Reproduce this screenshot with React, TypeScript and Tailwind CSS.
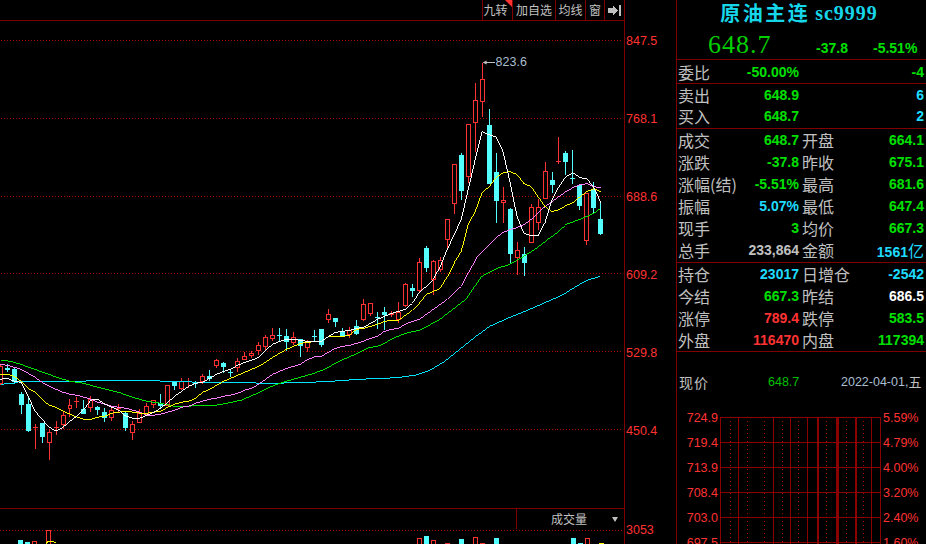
const RED = "#ff3232";
const CYAN = "#54ffff";

// [body top, body bottom, high, low, up], index 0 sits at x = -0.5, step 7px
type Candle = [number, number, number, number, 0 | 1];
const candles: Candle[] = [
  [367, 385, 365, 386, 1], [369, 371, 365, 373, 0], [370, 383, 369, 384, 0], [395, 406, 393, 415, 0],
  [405, 432, 399, 433, 0], [428, 429, 425, 450, 1], [424, 438, 424, 444, 0], [433, 444, 430, 461, 1],
  [428, 429, 422, 436, 1], [416, 426, 413, 430, 1], [406, 410, 400, 418, 1], [402, 403, 398, 409, 1],
  [410, 415, 401, 415, 0], [400, 409, 397, 413, 1], [408, 411, 407, 416, 0], [413, 419, 409, 423, 0],
  [411, 419, 407, 422, 1], [409, 410, 405, 413, 1], [414, 429, 412, 432, 0], [425, 434, 422, 441, 1],
  [414, 424, 410, 424, 1], [407, 415, 404, 416, 1], [401, 406, 401, 409, 1], [404, 407, 395, 409, 0],
  [386, 407, 386, 407, 1], [383, 387, 382, 391, 0], [382, 390, 379, 391, 1], [382, 383, 379, 389, 1],
  [383, 385, 382, 389, 0], [377, 383, 375, 385, 1], [377, 380, 371, 382, 0], [361, 367, 360, 369, 1],
  [364, 368, 363, 374, 0], [373, 374, 370, 378, 0], [362, 369, 359, 373, 1], [357, 361, 353, 361, 1],
  [354, 357, 352, 359, 1], [346, 352, 343, 356, 1], [338, 348, 336, 351, 1], [336, 340, 329, 342, 1],
  [336, 337, 329, 342, 0], [337, 343, 330, 352, 0], [338, 344, 333, 346, 1], [340, 347, 340, 358, 0],
  [342, 349, 341, 353, 1], [337, 338, 331, 342, 0], [330, 346, 330, 348, 0], [315, 321, 310, 324, 1],
  [319, 323, 319, 328, 0], [332, 337, 329, 338, 0], [331, 336, 328, 339, 1], [327, 335, 321, 336, 0],
  [305, 321, 300, 322, 1], [304, 315, 304, 317, 1], [318, 319, 313, 330, 0], [313, 316, 308, 331, 0],
  [314, 316, 312, 318, 1], [313, 321, 303, 324, 1], [285, 307, 284, 308, 1], [289, 292, 285, 298, 0],
  [262, 292, 258, 293, 1], [248, 269, 246, 273, 0], [261, 281, 260, 296, 1], [260, 271, 257, 273, 1],
  [219, 240, 219, 249, 1], [164, 204, 164, 214, 1], [155, 191, 153, 200, 0], [124, 177, 124, 183, 1],
  [100, 123, 83, 152, 1], [79, 102, 63, 117, 1], [125, 184, 109, 184, 0], [172, 201, 153, 223, 0],
  [200, 203, 187, 223, 1], [209, 254, 208, 263, 0], [250, 258, 242, 276, 1], [254, 263, 247, 277, 0],
  [207, 243, 204, 243, 1], [207, 223, 199, 230, 1], [171, 199, 162, 199, 1], [180, 185, 172, 193, 0],
  [161, 162, 137, 164, 1], [153, 162, 151, 175, 0], [178, 179, 150, 184, 0], [185, 206, 185, 210, 0],
  [193, 241, 193, 245, 1], [189, 208, 182, 213, 0], [219, 234, 203, 235, 0],
];

const ma5 = [380, 379, 382, 383, 397, 412, 420, 428, 432, 428, 422, 417, 410, 401, 400, 405, 408, 411, 417, 419, 419, 416, 413, 409, 403, 397, 392, 387, 384, 383, 379, 375, 372, 370, 366, 363, 361, 358, 351, 345, 342, 340, 340, 341, 342, 342, 342, 337, 333, 332, 331, 329, 328, 324, 320, 317, 314, 312, 310, 304, 293, 287, 280, 267, 250, 235, 220, 190, 160, 132, 135, 137, 152, 183, 217, 234, 236, 236, 223, 200, 187, 177, 173, 178, 179, 188, 203];
const ma10 = [375, 375, 377, 382, 389, 393, 400, 406, 408, 412, 415, 418, 420, 420, 418, 417, 414, 413, 412, 413, 414, 414, 413, 412, 408, 405, 403, 402, 399, 393, 390, 386, 382, 379, 376, 373, 370, 367, 363, 358, 354, 350, 347, 344, 343, 342, 342, 337, 337, 337, 336, 330, 329, 327, 325, 322, 321, 321, 316, 311, 304, 295, 292, 289, 277, 263, 252, 225, 212, 193, 187, 178, 173, 172, 175, 184, 187, 197, 207, 212, 210, 206, 203, 197, 192, 189, 192];
const ma20 = [365, 366, 368, 370, 374, 378, 383, 387, 390, 393, 395, 396, 398, 400, 403, 405, 407, 408, 409, 411, 413, 416, 416, 415, 413, 411, 408, 407, 404, 402, 400, 399, 397, 396, 394, 391, 389, 385, 380, 375, 372, 369, 367, 365, 360, 357, 357, 353, 349, 347, 346, 344, 342, 339, 337, 332, 330, 329, 325, 322, 320, 315, 310, 305, 300, 293, 287, 273, 260, 252, 245, 238, 233, 230, 228, 225, 220, 213, 207, 202, 197, 192, 188, 185, 184, 187, 188];
const ma40 = "0,361 10,362 20,365 34,370 48,375 62,380 69,382 83,384 97,388 118,393 132,398 146,402 160,404 174,407 188,407 202,406 216,406 227,404 241,401 255,395 269,388 283,383 297,379 311,375 325,370 339,362 353,356 367,349 381,346 395,338 409,333 420,331 440,320 453,310 466,300 482,277 497,269 510,265 524,257 538,248 552,237 566,225 580,220 594,214 601,209";
const ma60 = "0,385 14,384 20,382 85,382 87,381 135,381 200,383 275,384 311,383 332,382 360,380 386,379 400,378 415,376 430,371 445,362 460,350 475,338 490,327 510,318 530,310 555,299 567,293 580,285 590,280 601,277";

const cx = (i: number) => i * 7 - 0.5;
const toPoints = (ys: number[]) => ys.map((y, i) => `${cx(i)},${y}`).join(" ");

const volumes: [number, number, string][] = [
  [20.5, 540, CYAN], [27.5, 542, CYAN], [34.5, 541, RED], [48.5, 530, RED], [419.5, 538, RED], [426.5, 536, CYAN],
  [433.5, 540, RED], [447.5, 543, RED], [461.5, 539, CYAN], [475.5, 537, RED], [482.5, 543, RED], [496.5, 538, CYAN],
  [573.5, 538, CYAN], [580.5, 543, CYAN], [587.5, 538, RED], [601.5, 543, "#ffff00"],
];

function Chart() {
  return (
    <svg width="624" height="488" viewBox="0 21 624 488" className="block">
      <g shapeRendering="crispEdges">
        {[40, 118, 196, 274, 352, 430].map((y) => (
          <line key={y} x1="0" x2="624" y1={y + 0.5} y2={y + 0.5} stroke="#b00000" strokeDasharray="1 2" />
        ))}
        {candles.map(([top, bottom, high, low, up], i) => {
          const color = up ? RED : CYAN;
          const x = cx(i);
          return (
            <g key={i}>
              <line x1={x} x2={x} y1={high} y2={low} stroke={color} />
              {up ? (
                bottom - top < 2 ? (
                  <line x1={x - 2.5} x2={x + 2.5} y1={top + 0.5} y2={top + 0.5} stroke={color} />
                ) : (
                  <rect x={x - 2} y={top + 0.5} width="4" height={bottom - top - 1} fill="#000" stroke={color} />
                )
              ) : (
                <rect x={x - 2.5} y={top} width="5" height={bottom - top} fill={color} />
              )}
            </g>
          );
        })}
      </g>
      <g fill="none" strokeWidth="1" shapeRendering="crispEdges">
        <polyline points={ma60} stroke="#00e5ff" />
        <polyline points={ma40} stroke="#00e600" />
        <polyline points={toPoints(ma20)} stroke="#ff80ff" />
        <polyline points={toPoints(ma10)} stroke="#ffff00" />
        <polyline points={toPoints(ma5)} stroke="#ffffff" />
      </g>
      <line x1="484" x2="495" y1="62.5" y2="62.5" stroke="#c0c0c0" shapeRendering="crispEdges" />
      <polygon points="483,62.5 487,60.5 487,64.5" fill="#c0c0c0" />
      <text x="496" y="66" fill="#a9bfd2" fontSize="12.5" fontFamily="'Liberation Sans', sans-serif">
        823.6
      </text>
    </svg>
  );
}

function VolumeBars() {
  return (
    <svg width="624" height="15" viewBox="0 529 624 15" className="block" shapeRendering="crispEdges">
      <line x1="0" x2="624" y1="530.5" y2="530.5" stroke="#b00000" strokeDasharray="1 2" />
      {volumes.map(([x, y, color], i) =>
        color === CYAN ? (
          <rect key={i} x={x - 2.5} y={y} width="5" height={544 - y} fill={color} />
        ) : (
          <rect key={i} x={x - 2} y={y + 0.5} width="4" height={20} fill="#000" stroke={color} />
        ),
      )}
      <polyline points="46,544 48,541 52,541 56,543" fill="none" stroke="#ffff00" />
    </svg>
  );
}

function MiniGrid() {
  const solid = [0, 18, 53, 70, 87, 97, 116, 135, 151, 160];
  const thick = [97, 117, 135];
  const dotted = [10, 27, 44, 62, 78, 106, 126, 143];
  return (
    <svg width="161" height="127" viewBox="0 0 161 127" className="mt-[9px] block" shapeRendering="crispEdges">
      {[0, 25, 50, 75, 100, 125].map((y) => (
        <line key={y} x1="0" x2="160" y1={y + 0.5} y2={y + 0.5} stroke="#8b0000" />
      ))}
      {solid.map((x) => (
        <line key={x} x1={x + 0.5} x2={x + 0.5} y1="0" y2="127" stroke="#8b0000" />
      ))}
      {thick.map((x) => (
        <line key={x} x1={x + 1} x2={x + 1} y1="0" y2="127" stroke="#8b0000" strokeWidth="2" />
      ))}
      {dotted.map((x) => (
        <line key={x} x1={x + 0.5} x2={x + 0.5} y1="4" y2="127" stroke="#b00000" strokeDasharray="1 3" />
      ))}
    </svg>
  );
}

const GREEN = "text-[#00e000]";
const SKY = "text-[#1fdcff]";

type Cell = { label?: string; value: string; color: string; unit?: string };

function Value({ value, color, unit }: { value: string; color: string; unit?: string }) {
  return (
    <span className={`font-['Liberation_Sans'] text-[14px] font-bold leading-none ${color}`}>
      {value}
      {unit && <span className="font-['Noto_Sans_CJK_SC'] text-[16px] font-normal leading-none">{unit}</span>}
    </span>
  );
}

function Row({ left, right }: { left: Cell; right: Cell }) {
  return (
    <div className="grid flex-1 grid-cols-[121px_1fr] items-center gap-x-[3px] pl-[1px] pr-[2px]">
      {[left, right].map((cell, i) => (
        <div key={i} className="flex items-center justify-between whitespace-nowrap">
          <span className="text-[16px] leading-none text-[#c0c0c0]">{cell.label}</span>
          <Value value={cell.value} color={cell.color} unit={cell.unit} />
        </div>
      ))}
    </div>
  );
}

const tools = [
  { label: "九转", cls: "w-[30px] pr-[4px]" },
  { label: "加自选", cls: "w-[43px]" },
  { label: "均线", cls: "w-[30px]" },
  { label: "窗", cls: "w-[19px]" },
];

export default function App() {
  return (
    <div className="flex h-[544px] w-[926px] overflow-hidden bg-black font-['Noto_Sans_CJK_SC','Liberation_Sans',sans-serif]">
      {/* chart */}
      <div className="flex w-[624px] shrink-0 flex-col">
        <div className="flex h-[21px] shrink-0 justify-end border-b border-[#800000]">
          {tools.map((t, i) => (
            <div
              key={t.label}
              className={`relative flex items-center justify-center border-l border-[#800000] text-[12px] leading-none text-[#c0c0c0] ${t.cls}`}
            >
              {t.label}
              {i === 0 && (
                <span className="absolute right-0 top-0 h-0 w-0 border-l-[7px] border-t-[7px] border-l-transparent border-t-[#ff3232]" />
              )}
            </div>
          ))}
          <div className="flex w-[20px] items-center justify-center border-l border-[#800000]">
            <svg width="13" height="11" viewBox="0 0 13 11" shapeRendering="crispEdges">
              <path d="M0 3h5V0l5 5.5-5 5.5V8H0z" fill="#c0c0c0" />
              <rect x="11" y="0" width="2" height="11" fill="#c0c0c0" />
            </svg>
          </div>
        </div>
        <Chart />
        <div className="flex flex-1 flex-col border-t border-[#800000]">
          <div className="flex h-[20px] shrink-0 justify-end">
            <div className="flex w-[108px] items-center border-l border-[#800000] pl-[34px]">
              <span className="text-[12px] leading-none text-[#c0c0c0]">成交量</span>
              <span className="ml-[25px] h-0 w-0 border-x-[3px] border-t-[5px] border-x-transparent border-t-[#c0c0c0]" />
            </div>
          </div>
          <VolumeBars />
        </div>
      </div>

      {/* price axis */}
      <div className="flex w-[52px] shrink-0 flex-col border-l border-[#800000] pl-[1px] pt-[31px] font-['Liberation_Sans'] text-[12.5px] leading-[20px] text-[#ff3232]">
        {["847.5", "768.1", "688.6", "609.2", "529.8", "450.4"].map((p) => (
          <div key={p} className="h-[78px] shrink-0">
            {p}
          </div>
        ))}
        <div className="mt-[21px]">3053</div>
      </div>

      {/* quote panel */}
      <div className="flex h-[544px] w-[250px] shrink-0 flex-col border-l border-[#800000]">
        <div className="flex h-[25px] shrink-0 items-center justify-center pr-[5px] text-[20px] font-bold leading-[24px] text-[#16d6ea]">
          <span className="tracking-[2.5px]">原油主连</span>
          <span className="ml-[5px] font-['Liberation_Serif'] tracking-[1px]">sc9999</span>
        </div>
        <div className="flex h-[35px] shrink-0 items-center whitespace-nowrap border-b border-[#800000] pl-[31px]">
          <span className="mt-[6px] w-[107px] font-['Liberation_Serif'] text-[26px] leading-none tracking-[1px] text-[#00d000]">648.7</span>
          <span className="mt-[7px] w-[33px] text-right"><Value value="-37.8" color={GREEN} /></span>
          <span className="mt-[7px] ml-[25px] w-[44px] text-right"><Value value="-5.51%" color={GREEN} /></span>
        </div>
        <div className="flex h-[24px] shrink-0 flex-col border-b border-[#800000]">
          <Row left={{ label: "委比", value: "-50.00%", color: GREEN }} right={{ value: "-4", color: GREEN }} />
        </div>
        <div className="flex h-[45px] shrink-0 flex-col border-b border-[#800000] pb-[2px]">
          <Row left={{ label: "卖出", value: "648.9", color: GREEN }} right={{ value: "6", color: SKY }} />
          <Row left={{ label: "买入", value: "648.7", color: GREEN }} right={{ value: "2", color: SKY }} />
        </div>
        <div className="flex h-[134px] shrink-0 flex-col border-b border-[#800000] pb-[1px]">
          <Row left={{ label: "成交", value: "648.7", color: GREEN }} right={{ label: "开盘", value: "664.1", color: GREEN }} />
          <Row left={{ label: "涨跌", value: "-37.8", color: GREEN }} right={{ label: "昨收", value: "675.1", color: GREEN }} />
          <Row left={{ label: "涨幅(结)", value: "-5.51%", color: GREEN }} right={{ label: "最高", value: "681.6", color: GREEN }} />
          <Row left={{ label: "振幅", value: "5.07%", color: SKY }} right={{ label: "最低", value: "647.4", color: GREEN }} />
          <Row left={{ label: "现手", value: "3", color: GREEN }} right={{ label: "均价", value: "667.3", color: GREEN }} />
          <Row left={{ label: "总手", value: "233,864", color: "text-[#c0c0c0]" }} right={{ label: "金额", value: "1561", unit: "亿", color: SKY }} />
        </div>
        <div className="flex h-[89px] shrink-0 flex-col border-b border-[#800000]">
          <Row left={{ label: "持仓", value: "23017", color: SKY }} right={{ label: "日增仓", value: "-2542", color: SKY }} />
          <Row left={{ label: "今结", value: "667.3", color: GREEN }} right={{ label: "昨结", value: "686.5", color: "text-white" }} />
          <Row left={{ label: "涨停", value: "789.4", color: "text-[#ff3232]" }} right={{ label: "跌停", value: "583.5", color: GREEN }} />
          <Row left={{ label: "外盘", value: "116470", color: "text-[#ff3232]" }} right={{ label: "内盘", value: "117394", color: GREEN }} />
        </div>

        <div className="flex h-[56px] shrink-0 items-center whitespace-nowrap pl-[2px] pr-[2px] pt-[4px] font-['Liberation_Sans'] text-[12.5px]">
          <span className="w-[89px] font-['Noto_Sans_CJK_SC'] text-[14px] tracking-[1px] text-[#c0c0c0]">现价</span>
          <span className="w-[73px] text-[#00c000]">648.7</span>
          <span className="text-[#a9bfd2]">2022-04-01,</span>
          <span className="font-['Noto_Sans_CJK_SC'] text-[13px] text-[#c0c0c0]">五</span>
        </div>

        <div className="flex flex-1 overflow-hidden font-['Liberation_Sans'] text-[12.5px] leading-[16px] text-[#ff3232]">
          <div className="flex w-[43px] shrink-0 flex-col items-end pr-[2px] pt-[2px]">
            {["724.9", "719.4", "713.9", "708.4", "703.0", "697.5"].map((p) => (
              <div key={p} className="h-[25px] shrink-0">{p}</div>
            ))}
          </div>
          <MiniGrid />
          <div className="flex flex-col pl-[2px] pt-[2px]">
            {["5.59%", "4.79%", "4.00%", "3.20%", "2.40%", "1.60%"].map((p) => (
              <div key={p} className="h-[25px] shrink-0">{p}</div>
            ))}
          </div>
        </div>
      </div>
    </div>
  );
}
